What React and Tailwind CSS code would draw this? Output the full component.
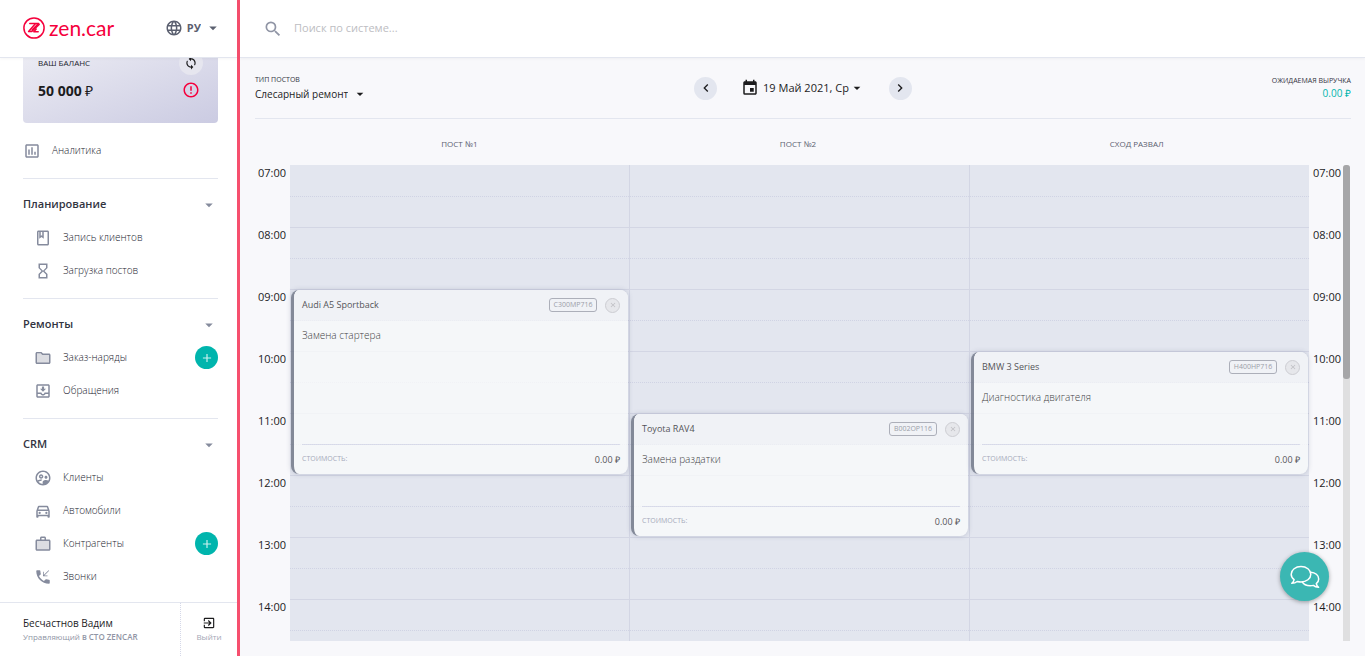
import React from 'react';
import {
  MdAdd,
  MdArrowDropDown,
  MdChevronLeft,
  MdChevronRight,
  MdErrorOutline,
  MdEvent,
  MdExitToApp,
  MdHourglassEmpty,
  MdLanguage,
  MdOutlineClass,
  MdOutlineDirectionsCar,
  MdOutlineFolder,
  MdOutlineInsertChart,
  MdOutlineMoveToInbox,
  MdOutlineSupervisedUserCircle,
  MdPhoneCallback,
  MdSearch,
  MdSync,
  MdWorkOutline,
} from 'react-icons/md';

const sections = [
  {
    title: 'Планирование',
    items: [
      { label: 'Запись клиентов', icon: MdOutlineClass },
      { label: 'Загрузка постов', icon: MdHourglassEmpty },
    ],
  },
  {
    title: 'Ремонты',
    items: [
      { label: 'Заказ-наряды', icon: MdOutlineFolder, tinted: true, canAdd: true },
      { label: 'Обращения', icon: MdOutlineMoveToInbox },
    ],
  },
  {
    title: 'CRM',
    items: [
      { label: 'Клиенты', icon: MdOutlineSupervisedUserCircle },
      { label: 'Автомобили', icon: MdOutlineDirectionsCar },
      { label: 'Контрагенты', icon: MdWorkOutline, tinted: true, canAdd: true },
      { label: 'Звонки', icon: MdPhoneCallback },
    ],
  },
];

const hours = ['07:00', '08:00', '09:00', '10:00', '11:00', '12:00', '13:00', '14:00'];

// start and span are counted in half-hour slots from 07:00
const posts = [
  {
    name: 'Пост №1',
    booking: { car: 'Audi A5 Sportback', plate: 'С300МР716', work: 'Замена стартера', start: 4, span: 6 },
  },
  {
    name: 'Пост №2',
    booking: { car: 'Toyota RAV4', plate: 'В002ОР116', work: 'Замена раздатки', start: 8, span: 4 },
  },
  {
    name: 'Сход развал',
    booking: { car: 'BMW 3 Series', plate: 'Н400НР716', work: 'Диагностика двигателя', start: 6, span: 4 },
  },
];

const Logo = () => (
  <a href="#" className="flex items-center gap-1 text-[#f5003c]">
    <svg width="22" height="22" viewBox="0 0 22 22" fill="none" stroke="currentColor" strokeWidth="1.5" strokeLinejoin="round" strokeLinecap="round">
      <circle cx="11" cy="11" r="10.1" />
      <path d="M6.800 6.600H15.600L9.200 12.900" />
      <path d="M12.300 6.800L5.600 14.600H8.600L16.200 7.400" />
      <path d="M13.200 12L10.800 14.800H15.200" />
    </svg>
    <span className="font-['Lato',sans-serif] text-[21px] leading-5">zen.car</span>
  </a>
);

const AddButton = ({ label }) => (
  <button aria-label={`Добавить: ${label}`} className="flex size-[23px] items-center justify-center rounded-full bg-[#00b5ad] text-white/80">
    <MdAdd size={14} />
  </button>
);

const NavItem = ({ item }) => {
  const Icon = item.icon;
  return (
    <li className="flex h-[33px] items-center justify-between pl-[11px]">
      <a href="#" className="flex items-center gap-[11px] text-[10px] font-light text-[#22242f]">
        <Icon size={18} className={item.tinted ? 'bg-[linear-gradient(#dcdde2,#dcdde2)] bg-[length:14px_10px] bg-[position:2px_5px] bg-no-repeat text-[#858b9d]' : 'text-[#858b9d]'} />
        {item.label}
      </a>
      {item.canAdd && <AddButton label={item.label} />}
    </li>
  );
};

const Sidebar = () => (
  <aside className="flex w-[240px] shrink-0 flex-col border-r-3 border-[#f64f6e] bg-white">
    <div className="relative z-10 flex h-[58px] shrink-0 items-center justify-between border-b border-[#e3e6ef] bg-white pr-[15px] pb-px pl-[23px] shadow-[0_1px_3px_rgba(0,0,0,0.04)]">
      <Logo />
      <label className="flex items-center text-[#5b6070]">
        <MdLanguage size={18} />
        <select aria-label="Язык" className="field-sizing-content appearance-none bg-transparent pl-1 text-[11px] font-bold">
          <option>РУ</option>
        </select>
        <MdArrowDropDown size={18} className="ml-[3px]" />
      </label>
    </div>

    <nav className="min-h-0 flex-1 overflow-hidden pr-[19px] pl-[23px]">
      <div className="-mt-2 rounded-[4px] bg-linear-to-br from-[#ededf4] to-[#cbcbe2] pr-[18px] pb-[19px] pl-[15px]">
        <div className="flex h-[26px] items-center justify-between text-[8px] text-[#22242f] uppercase">
          <span>Ваш баланс</span>
          <button aria-label="Обновить баланс" className="-mr-[3px] flex size-6 items-center justify-center rounded-full bg-[#e6e6ef] text-[#1c1c1e]">
            <MdSync size={14} />
          </button>
        </div>
        <div className="flex h-7 items-center justify-between">
          <span className="text-[14px] font-bold text-[#1c1c1e]">
            50 000 <span className="font-normal">₽</span>
          </span>
          <MdErrorOutline size={18} className="text-[#f5003c]" />
        </div>
      </div>

      <a href="#" className="my-[11px] flex h-[33px] items-center gap-[11px] text-[10px] font-light text-[#22242f]">
        <MdOutlineInsertChart size={18} className="text-[#858b9d]" />
        Аналитика
      </a>

      {sections.map((section) => (
        <section key={section.title} className="border-t border-[#e3e6ef] pt-[9px] pb-[11px]">
          <button className="flex h-[33px] w-full items-center justify-between text-[11px] font-semibold text-[#32343f]">
            {section.title}
            <MdArrowDropDown size={18} className="text-[#858b9d]" />
          </button>
          <ul>
            {section.items.map((item) => (
              <NavItem key={item.label} item={item} />
            ))}
          </ul>
        </section>
      ))}
    </nav>

    <div className="flex h-[54px] shrink-0 border-t border-[#e3e6ef]">
      <div className="flex flex-1 flex-col justify-center pb-[2px] pl-[23px]">
        <p className="text-[10px] leading-4 font-medium text-[#1c1c1e]">Бесчастнов Вадим</p>
        <p className="text-[8px] leading-3 text-[#9095a5]">
          Управляющий <span className="font-semibold">в СТО ZENCAR</span>
        </p>
      </div>
      <button className="flex w-[57px] flex-col items-center justify-center gap-px border-l border-dotted border-[#d5d8e8] text-[8px] leading-3 text-[#a3a7b5]">
        <MdExitToApp size={14} className="text-[#1c1c1e]" />
        Выйти
      </button>
    </div>
  </aside>
);

const Toolbar = () => (
  <div className="grid h-[61px] shrink-0 grid-cols-3 items-center border-b border-[#e3e6ef]">
    <label className="flex flex-col text-[7px] leading-3 text-[#32343f] uppercase">
      Тип постов
      <span className="flex items-center gap-1">
        <select className="field-sizing-content appearance-none bg-transparent text-[10px] leading-3 text-[#1c1c1e] normal-case">
          <option>Слесарный ремонт</option>
        </select>
        <MdArrowDropDown size={16} className="text-[#1c1c1e]" />
      </span>
    </label>

    <div className="flex items-center justify-center gap-6 text-[#1c1c1e]">
      <button aria-label="Предыдущий день" className="flex size-[23px] items-center justify-center rounded-full bg-[#e3e6ef]">
        <MdChevronLeft size={16} />
      </button>
      <button className="flex items-center text-[11px]">
        <MdEvent size={18} className="mr-1" />
        19 Май 2021, Ср
        <MdArrowDropDown size={16} />
      </button>
      <button aria-label="Следующий день" className="flex size-[23px] items-center justify-center rounded-full bg-[#e3e6ef]">
        <MdChevronRight size={16} />
      </button>
    </div>

    <div className="pb-[2px] text-right">
      <p className="text-[7px] leading-3 text-[#32343f] uppercase">Ожидаемая выручка</p>
      <p className="text-[10px] leading-3 text-[#00b5ad]">0.00 ₽</p>
    </div>
  </div>
);

const Booking = ({ booking }) => (
  <article
    className="z-1 col-start-1 m-px flex flex-col overflow-hidden rounded-lg border-l-3 border-[#636b7c] bg-[#fcfdfd] opacity-75 shadow-[0_0_5px_rgba(60,70,110,0.3)]"
    style={{ gridRow: `${booking.start + 1} / span ${booking.span}` }}
  >
    <header className="flex h-[31px] shrink-0 items-center bg-[#f5f6f9] px-2 pb-px">
      <h3 className="flex-1 text-[9px] font-medium text-[#1c1c1e]">{booking.car}</h3>
      <span className="flex h-[14px] w-12 items-center justify-center rounded-[3px] border border-[#9a9da8] text-[7px] text-[#83868f]">
        {booking.plate}
      </span>
      <button aria-label="Удалить запись" className="ml-2 flex size-[15px] items-center justify-center rounded-full border border-[#c4c4c8] bg-[#e8e8ea] text-[#b4b4b8]">
        <MdAdd size={10} className="rotate-45" />
      </button>
    </header>
    <p className="flex-1 px-2 pt-[6px] text-[10px] leading-4 font-light text-black">{booking.work}</p>
    <footer className="mx-2 flex h-[30px] shrink-0 items-center justify-between border-t border-[#d9dbea] text-[9px] font-medium text-[#1c1c1e]">
      <span className="text-[7px] font-medium text-[#8f94a8] uppercase">Стоимость:</span>
      0.00 ₽
    </footer>
  </article>
);

const Times = ({ className }) => (
  <div className={className}>
    {hours.map((hour) => (
      <div key={hour} className="h-[62px] text-[11px] leading-[15px] text-[#1c1c1e]">
        {hour}
      </div>
    ))}
  </div>
);

const Schedule = () => (
  <div className="flex min-h-0 flex-1 flex-col pb-[15px]">
    <div className="flex h-[46px] shrink-0 items-center pt-1 pr-[45px] pl-[35px]">
      {posts.map((post) => (
        <h2 key={post.name} className="flex-1 text-center text-[8px] font-medium text-[#5b6070] uppercase">
          {post.name}
        </h2>
      ))}
    </div>
    <div className="flex min-h-0 flex-1 overflow-hidden pr-px">
      <Times className="w-[35px] pr-1 text-right" />
      <div className="flex flex-1 bg-[#e3e6ef]">
        {posts.map((post) => (
          <div key={post.name} className="grid flex-1 auto-rows-[31px] grid-cols-1 border-r border-[#d3d6e4] last:border-r-0">
            {Array.from({ length: hours.length * 2 }, (_, slot) => (
              <div
                key={slot}
                className={`col-start-1 ${slot === 0 ? '' : slot % 2 ? 'border-t border-dotted border-[#d0d3e4]' : 'border-t border-[#d3d6e4]'}`}
                style={{ gridRow: slot + 1 }}
              />
            ))}
            <Booking booking={post.booking} />
          </div>
        ))}
      </div>
      <Times className="w-[34px] pl-1" />
      <div className="w-[7px] rounded-t-[3px] bg-[#dfdfe0]">
        <div className="h-[45%] rounded-[3px] bg-[#a6a6a8]" />
      </div>
    </div>
  </div>
);

const ChatButton = () => (
  <button aria-label="Открыть чат" className="fixed right-9 bottom-[55px] z-20 flex size-[49px] items-center justify-center rounded-full bg-[#3bb7b3] text-white shadow-[0_1px_4px_rgba(0,0,0,0.35)]">
    <svg width="30" height="24" viewBox="0 0 30 24" fill="none" stroke="currentColor" strokeWidth="1.5" strokeLinejoin="round">
      <path d="M11 1.500C5.600 1.500 1.200 5 1.200 9.200c0 2.200 1.100 4.100 2.900 5.500-.2 1.500-1.100 2.700-2.300 3.600 2.200 0 4-.6 5.400-1.800 1.200.3 2.500.5 3.800.5 5.400 0 9.800-3.500 9.800-7.800S16.400 1.500 11 1.500z" />
      <path d="M20.800 7.200c4.400.2 7.900 3.100 7.900 6.700 0 1.900-.9 3.500-2.400 4.700.2 1.500 1 2.800 2.300 3.700-2.100 0-3.900-.6-5.200-1.900-1 .3-2 .4-3.100.4-3.700 0-6.900-1.700-8.200-4.200" />
    </svg>
  </button>
);

const App = () => (
  <div className="flex h-screen overflow-hidden bg-[#f8f8fb] font-['Open_Sans',sans-serif]">
    <Sidebar />
    <div className="flex min-w-0 flex-1 flex-col">
      <header className="flex h-[58px] shrink-0 items-center gap-[11px] border-b border-[#e3e6ef] bg-white px-[23px] shadow-[0_1px_3px_rgba(0,0,0,0.04)]">
        <MdSearch size={20} className="text-[#9095a5]" />
        <input type="search" aria-label="Поиск" placeholder="Поиск по системе..." className="flex-1 text-[11px] outline-none placeholder:text-[#bdbdc2]" />
      </header>
      <main className="flex min-h-0 flex-1 flex-col pr-[14px] pl-[15px]">
        <Toolbar />
        <Schedule />
      </main>
    </div>
    <ChatButton />
  </div>
);

export default App;
